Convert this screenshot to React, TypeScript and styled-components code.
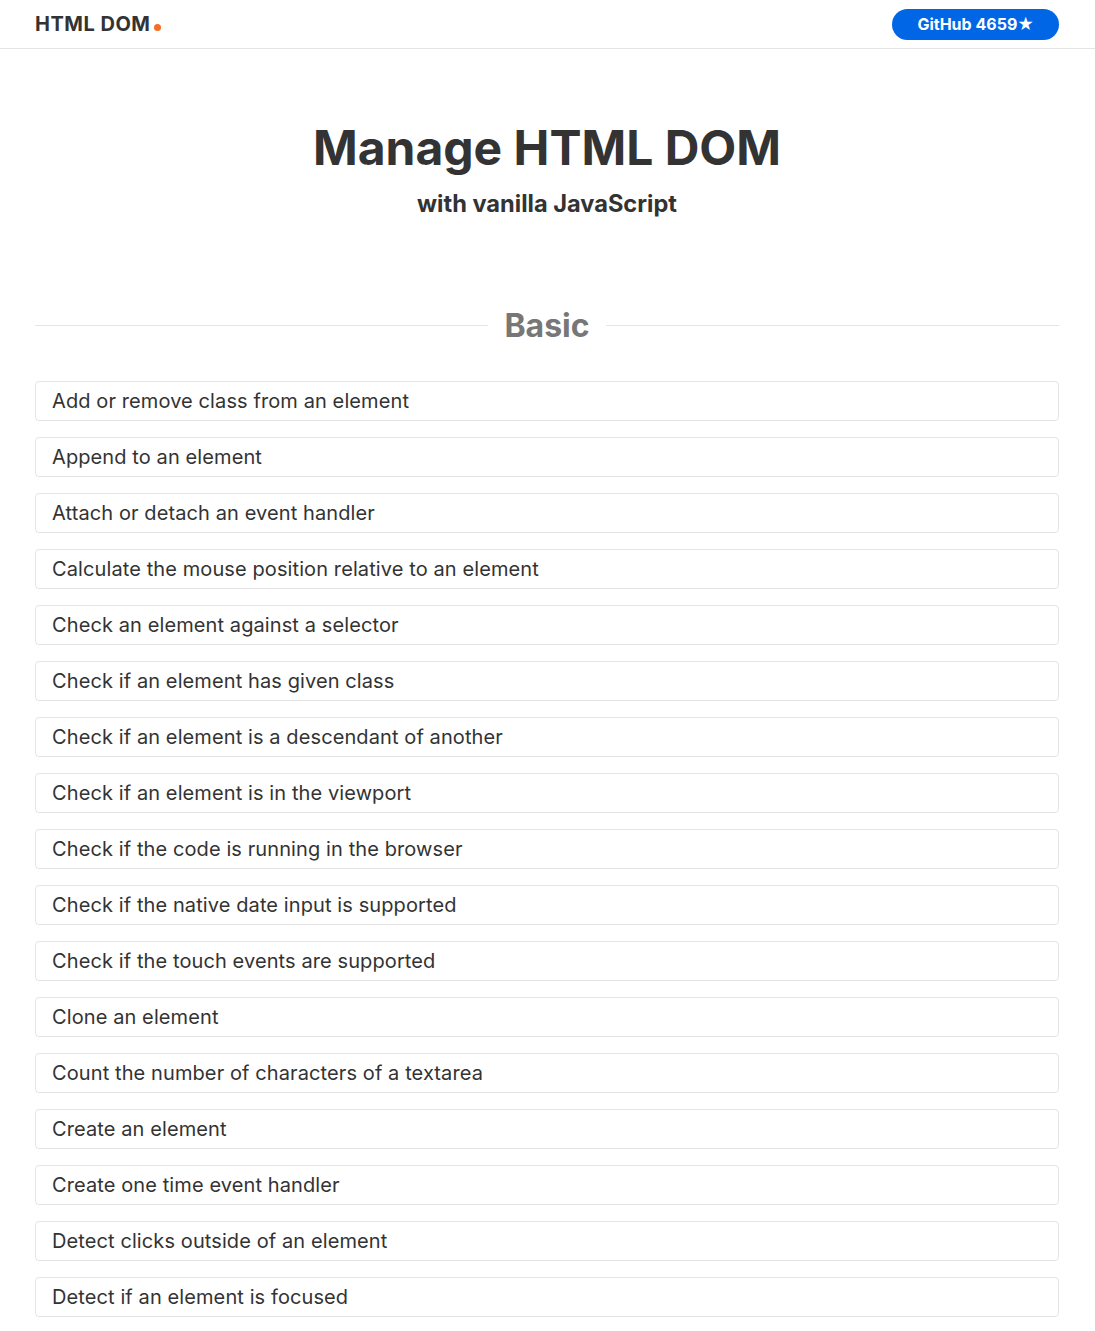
import React from "react";
import styled, { createGlobalStyle } from "styled-components";

const GlobalStyle = createGlobalStyle`
  body {
    margin: 0;
    font-family: Inter, "Noto Sans", sans-serif;
    color: #333;
    background: #fff;
  }
`;

const Header = styled.header`
  display: flex;
  align-items: center;
  justify-content: space-between;
  height: 48px;
  padding: 0 36px 0 35px;
  border-bottom: 1px solid #e4e4e4;
`;

const Logo = styled.a`
  display: flex;
  align-items: baseline;
  font-size: 20px;
  font-weight: 700;
  letter-spacing: 0.5px;
  color: #333;
  text-decoration: none;
`;

const Dot = styled.span`
  display: inline-block;
  width: 7px;
  height: 7px;
  margin-left: 4px;
  border-radius: 50%;
  background: #f36f21;
`;

const GithubButton = styled.a`
  display: flex;
  align-items: center;
  height: 31px;
  padding: 0 25px;
  border-radius: 16px;
  background: #0066e6;
  color: #fff;
  font-size: 16px;
  font-weight: 700;
  text-decoration: none;
`;

const Main = styled.main`
  padding: 0 36px 0 35px;
`;

const Hero = styled.section`
  display: flex;
  flex-direction: column;
  align-items: center;
  padding-top: 69px;
`;

const Title = styled.h1`
  margin: 0;
  font-size: 48px;
  line-height: 60px;
  font-weight: 700;
  color: #333;
`;

const Subtitle = styled.h2`
  margin: 11px 0 0;
  font-size: 23.6px;
  line-height: 30px;
  font-weight: 700;
  color: #333;
`;

const SectionHeading = styled.div`
  display: flex;
  align-items: center;
  gap: 16px;
  margin-top: 87px;
  color: #777;
  font-size: 32px;
  font-weight: 700;

  &::before,
  &::after {
    content: "";
    flex: 1;
    border-top: 1px solid #e4e4e4;
  }
`;

const List = styled.ul`
  display: flex;
  flex-direction: column;
  gap: 16px;
  margin: 36px 0 0;
  padding: 0;
  list-style: none;
`;

const Item = styled.li`
  display: flex;
  align-items: center;
  height: 38px;
  padding: 0 16px;
  border: 1px solid #e4e4e4;
  border-radius: 4px;
  font-size: 20px;
  letter-spacing: 0.1px;
  color: #333;
`;

const items = [
  "Add or remove class from an element",
  "Append to an element",
  "Attach or detach an event handler",
  "Calculate the mouse position relative to an element",
  "Check an element against a selector",
  "Check if an element has given class",
  "Check if an element is a descendant of another",
  "Check if an element is in the viewport",
  "Check if the code is running in the browser",
  "Check if the native date input is supported",
  "Check if the touch events are supported",
  "Clone an element",
  "Count the number of characters of a textarea",
  "Create an element",
  "Create one time event handler",
  "Detect clicks outside of an element",
  "Detect if an element is focused",
];

const App = () => {
  return (
    <>
      <GlobalStyle />
      <Header>
        <Logo href="#">
          HTML DOM
          <Dot />
        </Logo>
        <GithubButton href="#">GitHub 4659★</GithubButton>
      </Header>
      <Main>
        <Hero>
          <Title>Manage HTML DOM</Title>
          <Subtitle>with vanilla JavaScript</Subtitle>
        </Hero>
        <SectionHeading>Basic</SectionHeading>
        <List>
          {items.map((item) => (
            <Item key={item}>{item}</Item>
          ))}
        </List>
      </Main>
    </>
  );
};

export default App;
